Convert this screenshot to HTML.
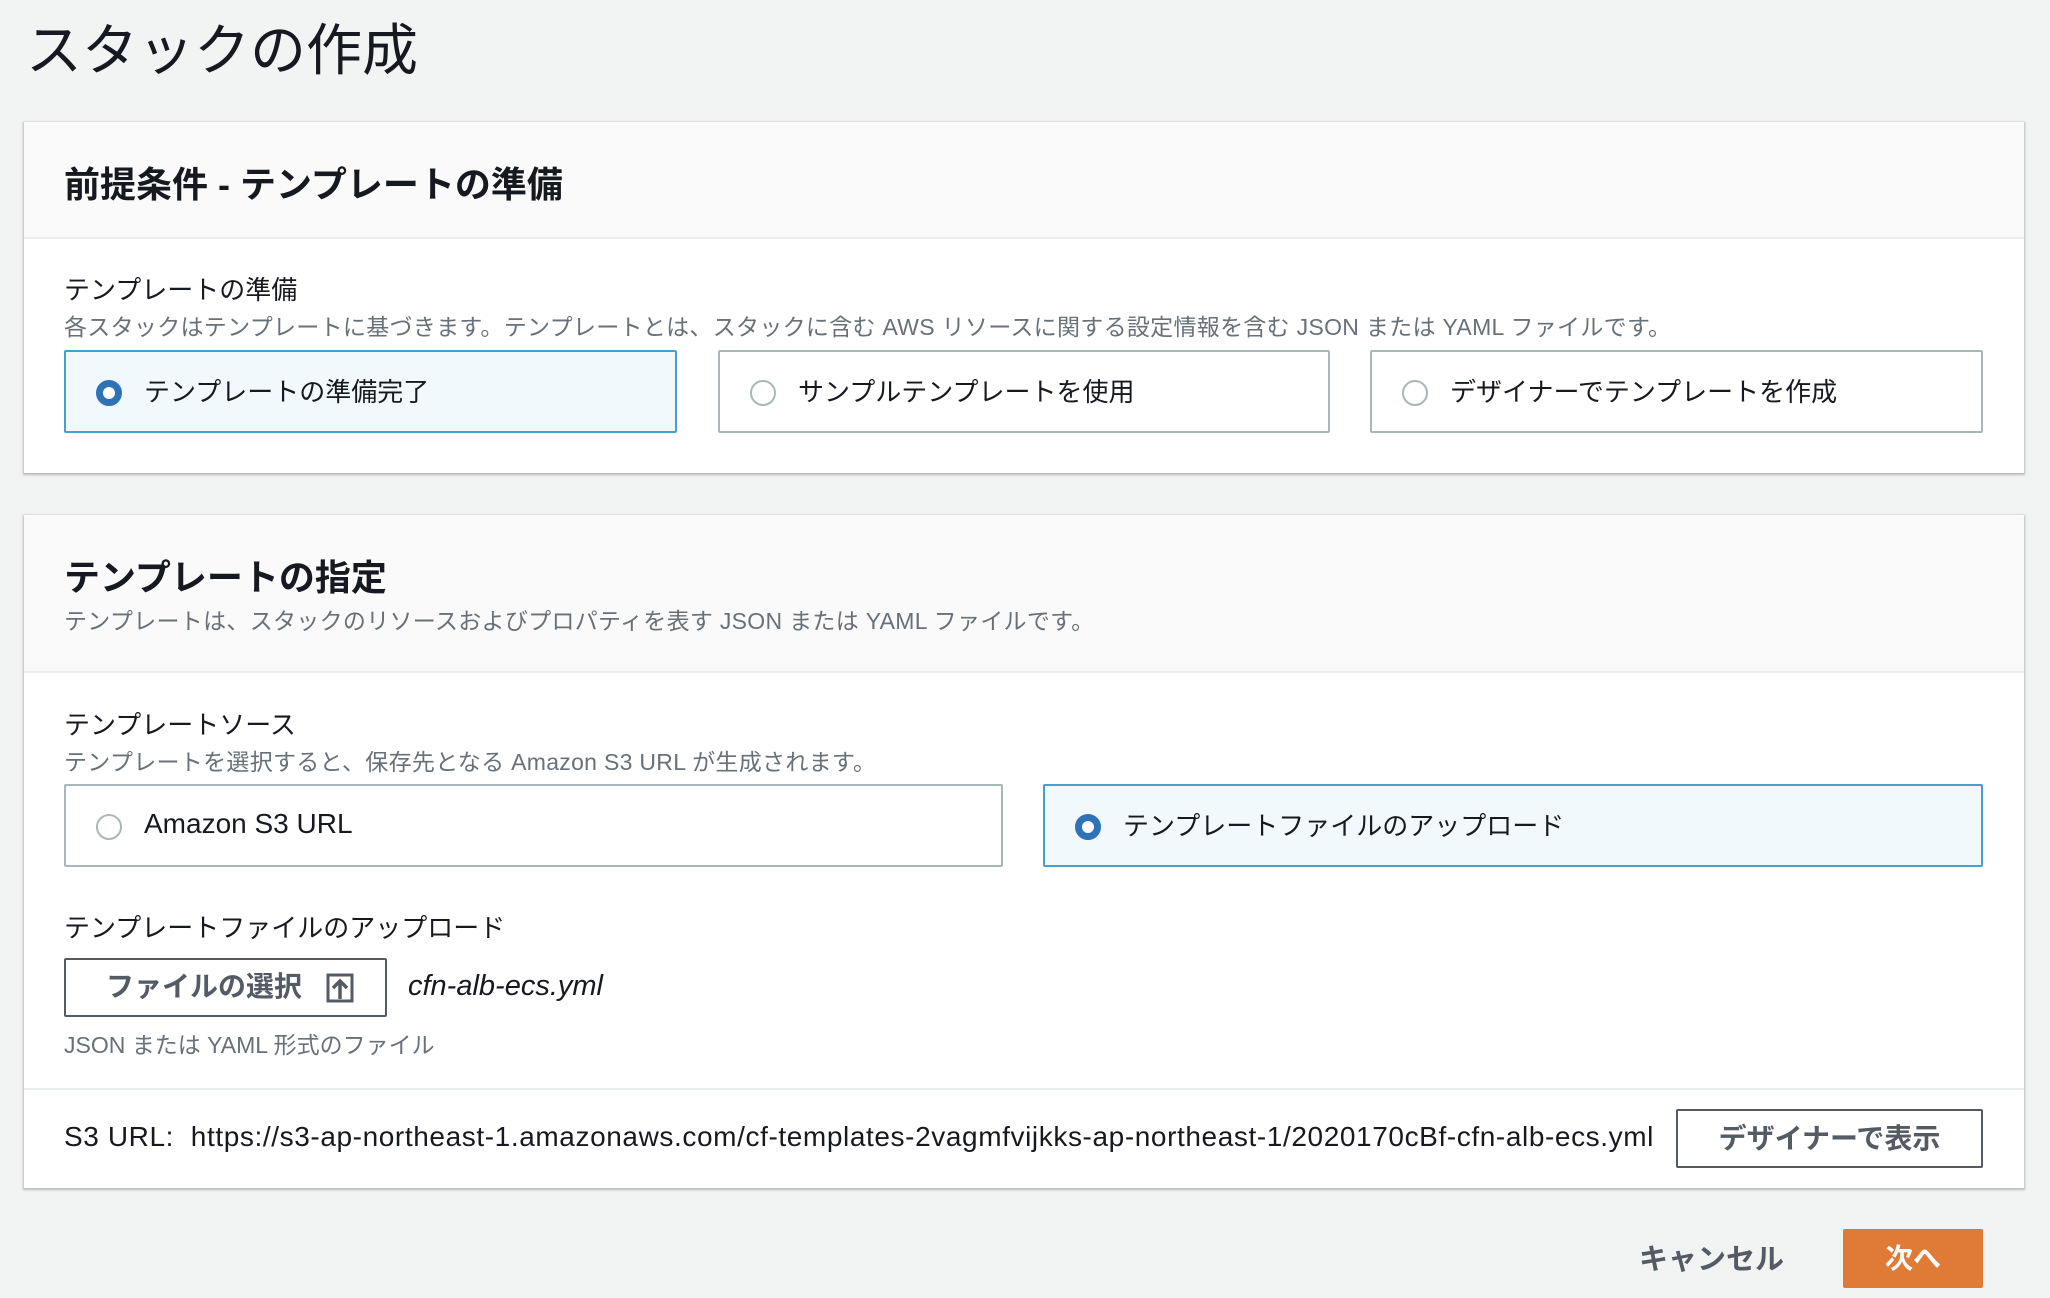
<!DOCTYPE html>
<html><head><meta charset="utf-8"><style>
*{box-sizing:border-box;margin:0;padding:0}
body{width:2050px;height:1298px;background:#f2f3f3;font-family:"Liberation Sans","Noto Sans CJK JP",sans-serif;color:#16191f;position:relative;overflow:hidden}
.a{position:absolute;white-space:nowrap}
.card{position:absolute;left:24px;width:2000px;background:#fff;box-shadow:0 1px 2px 1px rgba(0,28,36,.25)}
.hd{position:absolute;left:0;top:0;width:100%;background:#fafafa;border-bottom:2px solid #eaeded}
.tile{position:absolute;border:2px solid #aab7b8;border-radius:2px;background:#fff}
.tile.sel{border-color:#44a0cc;background:#f1f9fd}
.r{position:absolute;left:30px;top:28px;width:26px;height:26px;border-radius:50%;border:2px solid #aab7b8;background:#fff}
.sel .r{border:7px solid #2e73b8}
.tt{position:absolute;left:78px;top:20px;font-size:26px}
.lab{font-size:26px}
.desc{font-size:23px;color:#687078}
.btn{position:absolute;border:2px solid #545b64;border-radius:2px;background:#fff;font-size:28px;font-weight:bold;color:#545b64;text-align:center}
</style></head><body>
<div class="a" style="left:26px;top:6px;font-size:56px;">スタックの作成</div>

<div class="card" style="top:122px;height:351px">
  <div class="hd" style="height:117px"></div>
  <div class="a" style="left:40px;top:34px;font-size:36px;font-weight:bold">前提条件 - テンプレートの準備</div>
  <div class="a lab" style="left:40px;top:148px">テンプレートの準備</div>
  <div class="a desc" style="left:40px;top:186px;letter-spacing:0.3px">各スタックはテンプレートに基づきます。テンプレートとは、スタックに含む AWS リソースに関する設定情報を含む JSON または YAML ファイルです。</div>
  <div class="tile sel" style="left:40px;top:228px;width:613px;height:83px"><div class="r"></div><div class="tt">テンプレートの準備完了</div></div>
  <div class="tile" style="left:694px;top:228px;width:612px;height:83px"><div class="r"></div><div class="tt">サンプルテンプレートを使用</div></div>
  <div class="tile" style="left:1346px;top:228px;width:613px;height:83px"><div class="r"></div><div class="tt">デザイナーでテンプレートを作成</div></div>
</div>

<div class="card" style="top:515px;height:673px">
  <div class="hd" style="height:158px"></div>
  <div class="a" style="left:40px;top:34px;font-size:36px;font-weight:bold">テンプレートの指定</div>
  <div class="a desc" style="left:40px;top:87px;letter-spacing:0.3px">テンプレートは、スタックのリソースおよびプロパティを表す JSON または YAML ファイルです。</div>
  <div class="a lab" style="left:40px;top:190px">テンプレートソース</div>
  <div class="a desc" style="left:40px;top:228px;letter-spacing:0.3px">テンプレートを選択すると、保存先となる Amazon S3 URL が生成されます。</div>
  <div class="tile" style="left:40px;top:269px;width:939px;height:83px"><div class="r"></div><div class="tt" style="top:22px;font-size:28px">Amazon S3 URL</div></div>
  <div class="tile sel" style="left:1019px;top:269px;width:940px;height:83px"><div class="r"></div><div class="tt">テンプレートファイルのアップロード</div></div>
  <div class="a lab" style="left:40px;top:393px">テンプレートファイルのアップロード</div>
  <div class="btn" style="left:40px;top:443px;width:323px;height:59px;line-height:54px;text-align:left;padding-left:40px">ファイルの選択
    <svg width="28" height="30" viewBox="0 0 28 30" style="position:absolute;left:260px;top:13px"><rect x="2" y="2" width="24" height="26" fill="none" stroke="#545b64" stroke-width="3"/><path d="M14 26V9M7 15l7-7 7 7" fill="none" stroke="#545b64" stroke-width="3.5"/></svg></div>
  <div class="a" style="left:384px;top:455px;font-size:29px;font-style:italic">cfn-alb-ecs.yml</div>
  <div class="a desc" style="left:40px;top:511px">JSON または YAML 形式のファイル</div>
  <div style="position:absolute;left:0;top:573px;width:100%;height:2px;background:#eaeded"></div>
  <div class="a" style="left:40px;top:606px;font-size:28px;letter-spacing:0.6px">S3 URL:&nbsp; https://s3-ap-northeast-1.amazonaws.com/cf-templates-2vagmfvijkks-ap-northeast-1/2020170cBf-cfn-alb-ecs.yml</div>
  <div class="btn" style="left:1652px;top:594px;width:307px;height:59px;line-height:55px">デザイナーで表示</div>
</div>

<div class="a" style="left:1639px;top:1236px;font-size:29px;font-weight:bold;color:#545b64">キャンセル</div>
<div class="a" style="left:1843px;top:1229px;width:140px;height:59px;background:#df7b36;border-radius:2px;color:#fff;font-size:28px;font-weight:bold;text-align:center;line-height:59px">次へ</div>
</body></html>
